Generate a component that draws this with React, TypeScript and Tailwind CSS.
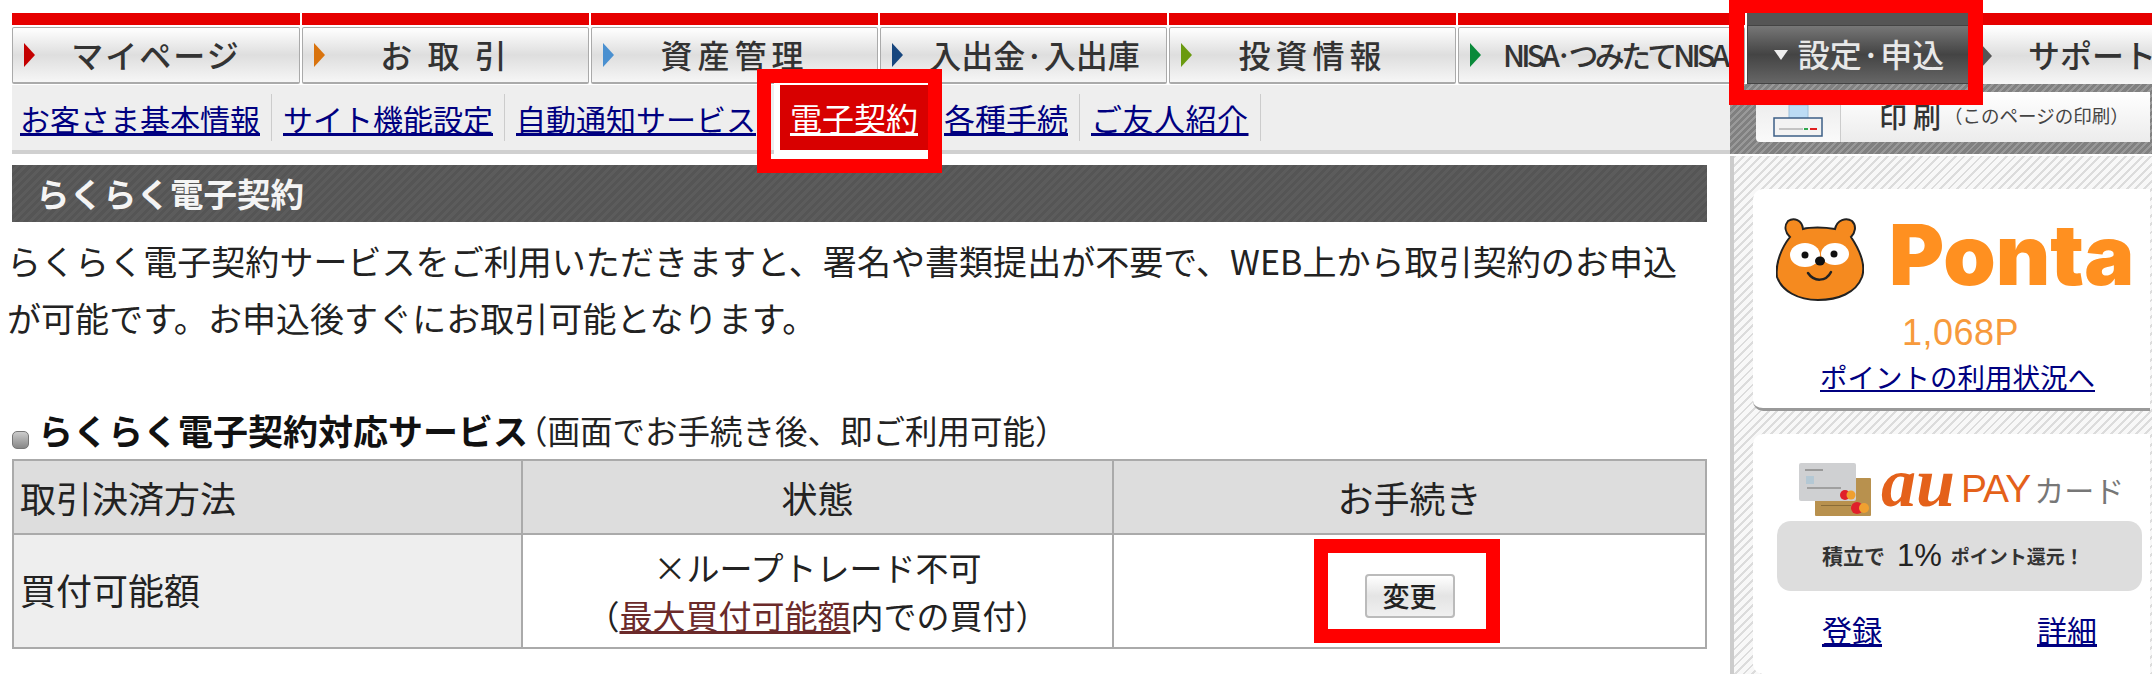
import React from "react";

const tabs = [
  { label: "マイページ", arrow: "#c40000", w: "w-[288px]", cls: "text-center pr-[22px] tracking-[2px]" },
  { label: "お 取 引", arrow: "#d9730d", w: "w-[287px]", cls: "text-center pr-[22px] tracking-[4px]" },
  { label: "資産管理", arrow: "#4a90d0", w: "w-[287px]", cls: "text-center pr-[22px] tracking-[5px]" },
  { label: "入出金·入出庫", arrow: "#17467e", w: "w-[287px]", cls: "text-center pr-0" },
  { label: "投資情報", arrow: "#6a9a10", w: "w-[287px]", cls: "text-center pr-[22px] tracking-[5px]" },
  { label: "NISA·つみたてNISA", arrow: "#0a8a3a", w: "w-[287px]", cls: "pl-[22px] tracking-[-3.8px] !text-[30px]" },
];

const subLinks = ["お客さま基本情報", "サイト機能設定", "自動通知サービス"];

const Arrow = ({ color }: { color: string }) => (
  <svg width="11" height="24" viewBox="0 0 11 24" className="shrink-0 ml-[11px]">
    <path d="M0 0 L11 12 L0 24 Z" fill={color} />
  </svg>
);

const Bear = () => (
  <svg width="88" height="84" viewBox="0 0 88 84">
    <path
      d="M12 4 C18 0 26 3 27 12 C34 10 48 10 59 12 C61 3 70 0 76 4 C81 9 79 16 75 20 C83 32 90 48 86 60 C80 76 62 83 42 83 C22 83 6 74 1 60 C-1 46 6 30 14 20 C9 15 8 9 12 4 Z"
      fill="#f58a1f"
      stroke="#222"
      strokeWidth="2"
    />
    <ellipse cx="29" cy="38" rx="15" ry="12" fill="#fff" />
    <ellipse cx="59" cy="37" rx="14" ry="11" fill="#fff" />
    <circle cx="29" cy="38" r="3.5" fill="#111" />
    <circle cx="58" cy="37" r="3.5" fill="#111" />
    <ellipse cx="44" cy="44" rx="5" ry="4.5" fill="#111" />
    <path d="M32 56 C38 65 50 65 55 55" fill="none" stroke="#222" strokeWidth="2.5" strokeLinecap="round" />
  </svg>
);

const Printer = () => (
  <svg width="50" height="32" viewBox="0 0 50 32">
    <rect x="16" y="0" width="19" height="18" fill="#bcdcf5" stroke="#9cc0dc" />
    <rect x="1" y="13" width="48" height="18" fill="#f3f3f3" stroke="#3c5f86" strokeWidth="1.5" />
    <rect x="6" y="23" width="24" height="2" fill="#c4c4c4" />
    <rect x="31" y="23" width="4" height="2" fill="#2fa84f" />
    <rect x="37" y="23" width="7" height="2" fill="#e02020" />
  </svg>
);

// small card picture next to the au PAY logo
const CardStack = () => (
  <svg width="72" height="53" viewBox="0 0 72 53" className="shrink-0">
    <rect x="16" y="15" width="56" height="38" rx="1" fill="#b8914e" />
    <rect x="22" y="42" width="30" height="1" fill="#8a6c38" />
    <circle cx="58" cy="45" r="6" fill="#e0202a" />
    <circle cx="65" cy="45" r="5" fill="#f0a030" />
    <rect x="0" y="0" width="57" height="38" rx="2" fill="#cfd0d2" />
    <rect x="6" y="6" width="18" height="2" fill="#9a9a9a" />
    <rect x="7" y="13" width="8" height="8" fill="#b4c8d4" />
    <rect x="8" y="24" width="34" height="2" fill="#a0a0a0" />
    <circle cx="46" cy="32" r="5" fill="#e0202a" />
    <circle cx="52" cy="32" r="4.5" fill="#f0a030" />
  </svg>
);

const PlainTab = ({ t }: { t: (typeof tabs)[number] }) => (
  <div className={`${t.w} shrink-0 flex flex-col`}>
    <div className="h-[12px] bg-[#e60000]" />
    <div className="mt-[2px] h-[57px] flex items-center border border-[#aaa] border-b-2 rounded-[2px] bg-gradient-to-b from-white via-[#dedede] to-[#f6f6f6] overflow-hidden">
      <Arrow color={t.arrow} />
      <span className={`flex-1 text-[32px] leading-[40px] -mt-[3px] text-[#333] whitespace-nowrap font-medium ${t.cls}`}>
        {t.label}
      </span>
    </div>
  </div>
);

export default function App() {
  return (
    <div className="relative w-[2152px] h-[674px] overflow-hidden bg-white font-['Noto_Sans_CJK_JP','Noto_Sans',sans-serif] text-[#222]">
      <nav className="flex gap-[2px] pl-[12px] pt-[13px] h-[85px]">
        {tabs.map((t) => (
          <PlainTab key={t.label} t={t} />
        ))}
        <div className="w-[224px] shrink-0 flex flex-col">
          <div className="h-[12px] bg-[#555]" />
          <div className="h-[59px] flex items-center justify-center gap-[10px] bg-gradient-to-b from-[#777] via-[#444] to-[#666] border border-[#444]">
            <svg width="14" height="10" viewBox="0 0 14 10">
              <path d="M0 0 H14 L7 10 Z" fill="#eee" />
            </svg>
            <span className="text-[32px] leading-[40px] -mt-[3px] text-[#e8e8e8] font-medium">設定·申込</span>
          </div>
        </div>
        <div className="flex-1 flex flex-col">
          <div className="h-[12px] bg-[#e60000]" />
          <div className="mt-[2px] h-[57px] flex items-center bg-gradient-to-b from-white via-[#dedede] to-[#f6f6f6] overflow-hidden">
            <svg width="11" height="24" viewBox="0 0 11 24" className="shrink-0 ml-[8px]">
              <path d="M0 0 L11 12 L0 24 Z" fill="#555" />
            </svg>
            <span className="ml-[36px] text-[32px] leading-[40px] -mt-[3px] text-[#333] whitespace-nowrap font-medium">サポート</span>
          </div>
        </div>
      </nav>

      <div className="flex">
        <main className="w-[1730px] shrink-0">
          <div className="ml-[12px] h-[69px] bg-[#eeeeee] border-b-4 border-[#d0d0d0] flex items-center">
            <div className="flex items-center h-[47px] pl-[8px]">
              {subLinks.map((s) => (
                <React.Fragment key={s}>
                  <a className="text-[30px] leading-[40px] text-[#000080] underline whitespace-nowrap">{s}</a>
                  <span className="mx-[11px] h-[47px] w-[1px] bg-[#ccc]" />
                </React.Fragment>
              ))}
              <a className="ml-[1px] bg-[#d80000] text-white underline text-[32px] leading-[64px] h-[65px] w-[148px] text-center whitespace-nowrap outline-[6px] outline-solid outline-white">
                電子契約
              </a>
              <a className="ml-[16px] text-[31px] leading-[40px] text-[#000080] underline whitespace-nowrap">各種手続</a>
              <span className="mx-[11px] h-[47px] w-[1px] bg-[#ccc]" />
              <a className="text-[31px] leading-[40px] text-[#000080] underline whitespace-nowrap tracking-[0.5px]">ご友人紹介</a>
              <span className="ml-[11px] h-[47px] w-[1px] bg-[#ccc]" />
            </div>
          </div>

          <h1 className="mt-[11px] ml-[12px] w-[1695px] h-[57px] flex items-center pl-[24px] text-[33.5px] font-bold text-[#f4f4f4] bg-[repeating-linear-gradient(135deg,#555_0,#555_3px,#5c5c5c_3px,#5c5c5c_6px)]">
            らくらく電子契約
          </h1>

          <p className="mt-[10px] ml-[7px] w-[1690px] text-[34px] leading-[57px] tracking-[0.05px]">
            らくらく電子契約サービスをご利用いただきますと、署名や書類提出が不要で、WEB上から取引契約のお申込
            <br />
            が可能です。お申込後すぐにお取引可能となります。
          </p>

          <div className="mt-[61px] ml-[12px] h-[45px] flex items-center">
            <span className="mt-[20px] w-[17px] h-[18px] rounded-[5px] bg-gradient-to-b from-[#ccc] to-[#888] border border-[#777]" />
            <h2 className="ml-[9px] text-[35px] font-bold text-[#111] whitespace-nowrap leading-[45px]">らくらく電子契約対応サービス</h2>
            <span className="-ml-[13px] text-[32.5px] whitespace-nowrap leading-[45px]">（画面でお手続き後、即ご利用可能）</span>
          </div>

          <table className="mt-[7px] ml-[12px] w-[1695px] table-fixed border-collapse text-[36px]">
            <thead>
              <tr className="h-[74px] bg-[#dddddd]">
                <th className="w-[509px] border-2 border-[#aaa] font-normal text-left pl-[6px]">取引決済方法</th>
                <th className="w-[591px] border-2 border-[#aaa] font-normal">状態</th>
                <th className="border-2 border-[#aaa] font-normal">お手続き</th>
              </tr>
            </thead>
            <tbody>
              <tr className="h-[114px]">
                <td className="border-2 border-[#aaa] bg-[#eeeeee] pl-[6px] pb-[4px]">買付可能額</td>
                <td className="border-2 border-[#aaa] text-center text-[33px] leading-[48px]">
                  ×ループトレード不可
                  <br />
                  （<a className="text-[#6b2a2a] underline">最大買付可能額</a>内での買付）
                </td>
                <td className="border-2 border-[#aaa] text-center">
                  <button className="w-[90px] h-[44px] rounded-[4px] border-2 border-[#bbb] bg-gradient-to-b from-white via-[#e4e4e4] to-[#f0f0f0] text-[27px] font-medium leading-[38px] text-[#222]">
                    変更
                  </button>
                </td>
              </tr>
            </tbody>
          </table>
        </main>

        <aside className="flex-1 flex flex-col min-w-0">
          <div className="h-[70px] -mt-[1px] pl-[26px] pr-[2px] pt-[8px] bg-[repeating-linear-gradient(135deg,#999_0,#999_2px,#808080_2px,#808080_5px)]">
            <div className="h-[50px] flex rounded-l-[4px] overflow-hidden">
              <div className="w-[85px] flex items-end justify-center pb-[5px] bg-gradient-to-b from-[#eaeaea] to-[#fafafa] border-r border-[#ccc]">
                <Printer />
              </div>
              <div className="flex-1 flex items-center pl-[38px] pb-[2px] bg-gradient-to-b from-white to-[#ececec] whitespace-nowrap">
                <span className="text-[28px] font-medium text-[#333] tracking-[6px]">印刷</span>
                <span className="-ml-[3px] text-[18.5px] text-[#444]">（このページの印刷）</span>
              </div>
            </div>
          </div>

          <div className="mt-[2px] h-[520px] border-l-4 border-[#ccc] pl-[19px] pr-[2px] pt-[33px] bg-[repeating-linear-gradient(135deg,#dcdcdc_0,#dcdcdc_2px,#f8f8f8_2px,#f8f8f8_6px)]">
            <section className="h-[222px] rounded-l-[10px] bg-white border-b-[3px] border-[#999] flex flex-col">
              <div className="flex items-center pl-[23px] pt-[28px]">
                <Bear />
                <span className="ml-[25px] -mt-[8px] text-[84px] leading-[84px] font-['Inter',sans-serif] font-black text-[#ff9020] tracking-[0px] whitespace-nowrap">
                  Ponta
                </span>
              </div>
              <p className="mt-[10px] pl-[149px] text-[36px] leading-[44px] text-[#f79a3c] font-medium font-['Liberation_Sans',sans-serif] tracking-[0.5px]">
                1,068P
              </p>
              <a className="mt-[3px] ml-[67px] text-[27.5px] leading-[36px] text-[#000080] underline whitespace-nowrap">
                ポイントの利用状況へ
              </a>
            </section>

            <section className="mt-[23px] h-[240px] rounded-l-[10px] bg-white">
              <div className="flex items-center pl-[46px] pt-[22px] h-[88px]">
                <CardStack />
                <span className="ml-[10px] -mt-[12px] text-[70px] leading-[52px] italic font-bold font-['Liberation_Serif',serif] text-[#e4611a]">au</span>
                <span className="ml-[6px] text-[39px] leading-[40px] font-medium font-['Liberation_Sans',sans-serif] text-[#e4611a] tracking-[-1px]">PAY</span>
                <span className="ml-[4px] text-[30px] leading-[40px] text-[#777] whitespace-nowrap">カード</span>
              </div>
              <div className="ml-[24px] mr-[8px] mt-[-1px] h-[70px] rounded-[14px] bg-[#dddddd] flex items-center pl-[45px] whitespace-nowrap text-[#333]">
                <span className="text-[21px] font-bold">積立で</span>
                <span className="ml-[12px] text-[31px] font-medium font-['Liberation_Sans',sans-serif] text-[#222]">1%</span>
                <span className="ml-[9px] text-[19px] font-bold">ポイント還元！</span>
              </div>
              <div className="flex justify-between pl-[69px] pr-[53px] mt-[20px]">
                <a className="text-[30px] leading-[36px] text-[#000080] underline">登録</a>
                <a className="text-[30px] leading-[36px] text-[#000080] underline">詳細</a>
              </div>
            </section>
          </div>
        </aside>
      </div>

      {/* red callouts drawn over the page */}
      <div className="absolute left-[1729px] top-0 w-[254px] h-[105px] border-[15px] border-t-[13px] border-[#ff0000] pointer-events-none" />
      <div className="absolute left-[757px] top-[69px] w-[185px] h-[104px] border-[14px] border-[#ff0000] pointer-events-none" />
      <div className="absolute left-[1314px] top-[539px] w-[186px] h-[104px] border-[14px] border-[#ff0000] pointer-events-none" />
    </div>
  );
}
